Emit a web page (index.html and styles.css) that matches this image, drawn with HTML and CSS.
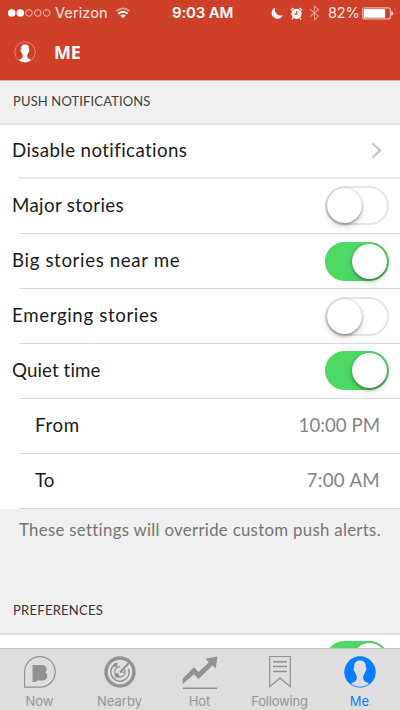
FILE: index.html
```html
<!DOCTYPE html>
<html lang="en">
<head>
<meta charset="utf-8">
<title>Me</title>
<link rel="stylesheet" href="styles.css">
</head>
<body>
<div class="screen">
  <header class="header">
    <div class="status">
      <svg class="signal" width="44" height="10" viewBox="0 0 44 10"><circle cx="4.700" cy="5" r="3.800" fill="#fff"/><circle cx="13.300" cy="5" r="3.800" fill="#fff"/><g fill="none" stroke="#f0b5a9"><circle cx="22" cy="5" r="3.300"/><circle cx="30.800" cy="5" r="3.300"/><circle cx="39.600" cy="5" r="3.300"/></g></svg>
      <span class="carrier">Verizon</span>
      <svg class="wifi" width="16" height="12" viewBox="0 0 16 12"><g fill="none" stroke="#fff"><path d="M1.2 4.2Q8 -1.4 14.8 4.2" stroke-width="1.5" opacity=".5"/><path d="M3.4 6.7Q8 2.7 12.6 6.7" stroke-width="1.8"/></g><path d="M5.3 8.4Q8 6.5 10.7 8.4L8 11.2Z" fill="#fff"/></svg>
      <span class="clock">9:03 AM</span>
      <svg class="moon" width="12" height="12" viewBox="0 0 12 12"><path d="M4.2 .6A5.8 5.8 0 1 0 11.8 8.2A5.9 5.9 0 0 1 4.2 .6Z" fill="#fff"/></svg>
      <svg class="alarm" width="13" height="13" viewBox="0 0 13 13"><circle cx="6.5" cy="6.8" r="5.1" fill="#fff"/><path d="M.9 3.2L3.4 1M12.1 3.2L9.6 1M3 11L2 12.3M10 11L11 12.3" stroke="#fff" stroke-width="1.3"/><path d="M6.7 3.7V7.2H4.2" fill="none" stroke="#cf3f28" stroke-width="1.1"/></svg>
      <svg class="bluetooth" width="11" height="16" viewBox="0 0 11 16"><path d="M1 4.3L9.5 11.3L5.4 14.8V1.2L9.5 4.7L1 11.7" fill="none" stroke="#e79b8c" stroke-width="1.1"/></svg>
      <span class="percent">82%</span>
      <svg class="battery" width="32" height="13" viewBox="0 0 32 13"><rect x=".6" y=".9" width="27.8" height="11" rx="2" fill="none" stroke="#f0b5a9" stroke-width="1.1"/><rect x="1.7" y="2" width="21.5" height="8.8" rx=".6" fill="#fff"/><path d="M29.3 4.2Q31.2 4.7 31.2 6.4Q31.2 8.1 29.3 8.6Z" fill="#fff"/></svg>
    </div>
    <div class="titlebar">
      <svg class="avatar" width="22" height="22" viewBox="0 0 32 32"><circle cx="16" cy="16" r="14.9" fill="none" stroke="#e08673" stroke-width="1.400"/><path d="M16 5C11.8 5 9.8 7.7 10.2 12C9.1 12.2 9.6 16 11 16.4C11.4 18.4 12.3 19.5 12.7 20.4C13.3 24.8 11.1 25.8 7 27.6Q10.5 31 16 31Q21.500 31 25 27.6C20.9 25.8 18.700 24.8 19.300 20.4C19.700 19.500 20.600 18.400 21 16.400C22.400 16 22.900 12.200 21.800 12C22.200 7.700 20.200 5 16 5Z" fill="#fff"/></svg>
      <h1 class="title">ME</h1>
    </div>
  </header>
  <main class="content">
    <h2 class="section section-push"><span>PUSH NOTIFICATIONS</span></h2>
    <div class="rows">
      <div class="row thick"><span class="label disable">Disable notifications</span><svg class="chevron" width="11" height="17" viewBox="0 0 11 17"><path d="M1.500 1.200L9 8.500L1.500 15.800" fill="none" stroke="#c4c4c8" stroke-width="2.200"/></svg></div>
      <div class="row major"><span class="label">Major stories</span><span class="toggle"></span></div>
      <div class="row"><span class="label wide">Big stories near me</span><span class="toggle on"></span></div>
      <div class="row"><span class="label wide">Emerging stories</span><span class="toggle"></span></div>
      <div class="row quiet"><span class="label">Quiet time</span><span class="toggle on"></span></div>
      <div class="row sub"><span class="label wide">From</span><span class="label value">10:00 PM</span></div>
      <div class="row sub"><span class="label">To</span><span class="label value am">7:00 AM</span></div>
    </div>
    <p class="note">These settings will override custom push alerts.</p>
    <h2 class="section section-pref"><span>PREFERENCES</span></h2>
    <div class="peek"><span class="toggle on"></span></div>
  </main>
  <nav class="tabs">
    <div class="tab"><svg width="34" height="34" viewBox="0 0 34 34"><path d="M1.600 32.200V16.500A15.300 15.300 0 1 1 17 32.200Z" fill="none" stroke="#929292" stroke-width="1.200"/><path d="M9.500 10H19C23.800 10 25 14.800 22.300 17.200C25.800 19.400 24.500 25.500 19.500 25.500H14L12.500 27H9.500Z" fill="#929292"/></svg><span>Now</span></div>
    <div class="tab"><svg width="34" height="34" viewBox="0 0 34 34" fill="none" stroke="#929292"><circle cx="17" cy="17" r="14" stroke-width="3.400"/><path d="M14.500 8.200A9.200 9.200 0 1 0 25.600 13.800M10.800 10.300A9.200 9.200 0 0 0 8 19" stroke-width="1.400"/><path d="M21.300 14A5.200 5.200 0 1 1 17 11.600" stroke-width="1.300"/><path d="M16.800 17.300L27 7" stroke-width="1.800"/><path d="M21 17H17" stroke-width="1.300"/><g fill="#929292" stroke="none"><circle cx="12.500" cy="10" r="2.100"/><circle cx="14" cy="20.500" r="2.200"/></g></svg><span>Nearby</span></div>
    <div class="tab"><svg width="36" height="34" viewBox="0 0 36 34"><path d="M.7 29V23.500L12 12.300L16.500 17L26.800 7.500L23.500 3.700L35.500 1.500L33.700 13.500L30.500 10.500L16.500 24L12 19.200Z" fill="#929292"/><path d="M1 33.200H35" stroke="#929292" stroke-width="1.400"/></svg><span>Hot</span></div>
    <div class="tab"><svg width="24" height="34" viewBox="0 0 24 34" fill="none" stroke="#929292"><path d="M1.700 1.500H22.300V31.800L12 23L1.700 31.800Z" stroke-width="1.200"/><path d="M5 6.700H19M5 11.500H19M5 16.500H19" stroke-width="1.600"/></svg><span class="following">Following</span></div>
    <div class="tab active"><svg width="32" height="34" viewBox="0 0 32 34"><circle cx="16" cy="17" r="15.700" fill="#087dff"/><path d="M16 5.500C11.800 5.500 9.800 8.200 10.200 12.500C9.100 12.700 9.600 16.500 11 16.900C11.400 18.900 12.300 20 12.700 20.900C13.300 26.300 10.600 26.300 7 28.500Q10.500 31.700 16 31.700Q21.500 31.700 25 28.500C21.400 26.300 18.700 26.300 19.300 20.900C19.700 20 20.600 18.900 21 16.900C22.400 16.500 22.900 12.700 21.800 12.500C22.200 8.200 20.200 5.500 16 5.500Z" fill="#dedede"/></svg><span>Me</span></div>
  </nav>
</div>
</body>
</html>
```
FILE: styles.css
```css
* { box-sizing: border-box; }
body { margin: 0; background: #f0f0f0; font-family: Lato, "Liberation Sans", sans-serif; font-variant-ligatures: none; color: #1b1b1b; }
h1, h2, p { margin: 0; font-weight: 400; }
svg { display: block; flex: none; }
span { white-space: nowrap; }

.screen { width: 400px; height: 710px; display: flex; flex-direction: column; overflow: hidden; }
.header { height: 81px; flex: none; background: #cf4029; color: #fff; border-bottom: 1px solid #dfb0aa; }
.status { height: 26px; display: flex; align-items: center; padding-left: 7px; font-family: Inter, "Liberation Sans", sans-serif; font-size: 14px; line-height: 26px; }
.carrier { width: 60px; padding-left: 4px; color: #fbe8e4; font-size: 14.5px; letter-spacing: .1px; }
.wifi { margin-left: 4px; }
.clock { width: 64px; margin-left: 41px; font-size: 15px; font-weight: 600; letter-spacing: -.15px; }
.moon { margin-left: 35px; }
.alarm { margin-left: 7px; }
.bluetooth { margin-left: 6px; }
.percent { width: 33px; margin-left: 8px; color: #fbe8e4; font-size: 14.5px; letter-spacing: -.2px; }
.battery { margin-left: 1px; }
.titlebar { height: 52px; display: flex; align-items: center; padding-left: 14px; }
.title { margin-left: 18px; font: 700 18px/52px "Open Sans", sans-serif; letter-spacing: -.3px; }

.content { height: 567px; flex: none; overflow: hidden; }
.section { display: flex; background: #f0f0f0; color: #404040; border-bottom: 2px solid #e3e3e3; padding-left: 13px; font-size: 13px; letter-spacing: .13px; }
.section-push { height: 44px; line-height: 41px; }
.section-pref { height: 45px; line-height: 41px; color: #333; margin-top: 37px; letter-spacing: .27px; }

.rows { background: #fff; }
.row { height: 55px; display: flex; align-items: center; justify-content: space-between; position: relative; padding: 0 11px 0 12px; font-size: 18.7px; line-height: 54px; }
.row::after { content: ""; position: absolute; left: 19px; right: 0; bottom: 0; height: 1px; background: #d8d8d8; }
.row.thick { height: 54px; line-height: 52px; padding-right: 18px; }
.row.thick::after { height: 2px; background: #e6e6e6; }
.row.sub { padding: 0 20px 0 35px; }
.label { padding-bottom: 4px; letter-spacing: .1px; }
.major .label { letter-spacing: .37px; }
.label.disable { letter-spacing: .4px; }
.label.wide { letter-spacing: .63px; }
.label.value { color: #848484; letter-spacing: 0; padding-bottom: 3px; }
.label.am { letter-spacing: .3px; }
.chevron { margin-top: -3px; }

.toggle { position: relative; width: 64px; height: 39px; border: 2px solid #e5e5e5; border-radius: 20px; background: #fff; flex: none; }
.toggle::after { content: ""; position: absolute; left: 0; top: 0; width: 35px; height: 35px; border-radius: 50%; background: #fff; box-shadow: 0 2px 3px rgba(0,0,0,.3), 0 0 1px rgba(0,0,0,.35), 0 4px 8px rgba(0,0,0,.1); }
.toggle.on { background: #4cd964; border-color: #4cd964; }
.toggle.on::after { left: 25px; }
.quiet .toggle, .major .toggle { top: -1px; }

.note { height: 44px; padding-left: 19px; font-size: 16.8px; line-height: 41px; letter-spacing: .31px; color: #757575; white-space: nowrap; }
.peek { height: 20px; background: #fff; padding: 6px 11px 0 0; display: flex; justify-content: flex-end; }

.tabs { height: 62px; flex: none; display: grid; grid-template-columns: repeat(5, 80px); background: #dedede; border-top: 1px solid #c4c4c4; }
.tab { display: flex; flex-direction: column; align-items: center; padding-top: 6px; padding-right: 1px; color: #969696; font: 13px/24px Inter, "Liberation Sans", sans-serif; }
.following { letter-spacing: -.2px; }
.active { color: #087dff; }
```
